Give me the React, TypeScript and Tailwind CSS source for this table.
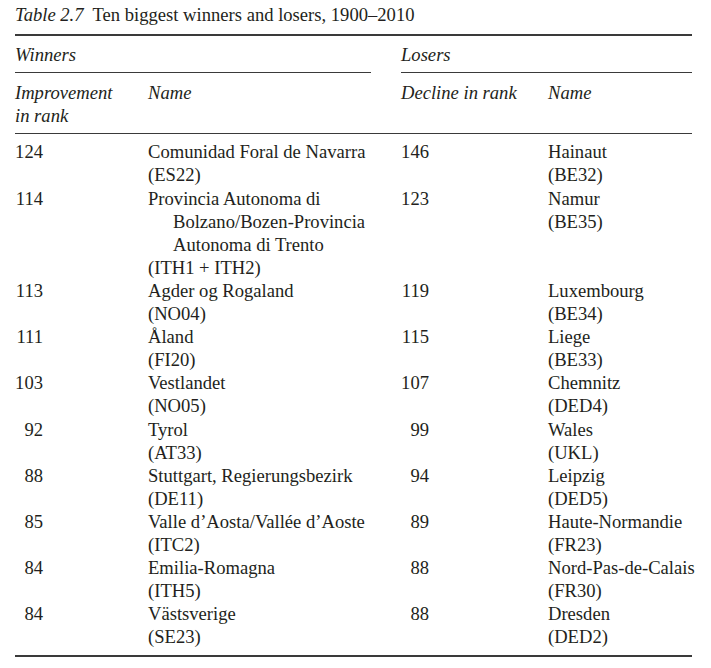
type Entry = { rank: number; name: string[]; code: string };

const winners: Entry[] = [
  { rank: 124, name: ["Comunidad Foral de Navarra"], code: "(ES22)" },
  {
    rank: 114,
    name: ["Provincia Autonoma di", "Bolzano/Bozen-Provincia", "Autonoma di Trento"],
    code: "(ITH1 + ITH2)",
  },
  { rank: 113, name: ["Agder og Rogaland"], code: "(NO04)" },
  { rank: 111, name: ["Åland"], code: "(FI20)" },
  { rank: 103, name: ["Vestlandet"], code: "(NO05)" },
  { rank: 92, name: ["Tyrol"], code: "(AT33)" },
  { rank: 88, name: ["Stuttgart, Regierungsbezirk"], code: "(DE11)" },
  { rank: 85, name: ["Valle d’Aosta/Vallée d’Aoste"], code: "(ITC2)" },
  { rank: 84, name: ["Emilia-Romagna"], code: "(ITH5)" },
  { rank: 84, name: ["Västsverige"], code: "(SE23)" },
];

const losers: Entry[] = [
  { rank: 146, name: ["Hainaut"], code: "(BE32)" },
  { rank: 123, name: ["Namur"], code: "(BE35)" },
  { rank: 119, name: ["Luxembourg"], code: "(BE34)" },
  { rank: 115, name: ["Liege"], code: "(BE33)" },
  { rank: 107, name: ["Chemnitz"], code: "(DED4)" },
  { rank: 99, name: ["Wales"], code: "(UKL)" },
  { rank: 94, name: ["Leipzig"], code: "(DED5)" },
  { rank: 89, name: ["Haute-Normandie"], code: "(FR23)" },
  { rank: 88, name: ["Nord-Pas-de-Calais"], code: "(FR30)" },
  { rank: 88, name: ["Dresden"], code: "(DED2)" },
];

const NameCell = ({ entry }: { entry: Entry }) => (
  <div>
    {entry.name.map((line, i) => (
      <div key={i} className={i > 0 ? "pl-[25px]" : ""}>
        {line}
      </div>
    ))}
    <div>{entry.code}</div>
  </div>
);

export default function App() {
  return (
    <div className="bg-white min-h-[668px] pl-[15px] pt-[3px] font-['Liberation_Serif',serif] text-[18.6px] leading-[23.1px] text-[#231f20]">
      <div className="w-[677px]">
        <p className="whitespace-nowrap">
          <i>Table 2.7</i>&nbsp; Ten biggest winners and losers, 1900–2010
        </p>
        <div className="mt-[8px] h-[2px] bg-[#3a3a3a]" />

        {/* group headers */}
        <div className="flex italic">
          <div className="w-[356px]">
            <p className="pt-[7px] pb-[6px]">Winners</p>
            <div className="h-px bg-[#3a3a3a]" />
          </div>
          <div className="ml-[30px] flex-1">
            <p className="pt-[7px] pb-[6px]">Losers</p>
            <div className="h-px bg-[#3a3a3a]" />
          </div>
        </div>

        {/* column headers */}
        <div className="grid grid-cols-[133px_253px_147px_1fr] italic pt-[8px] pb-[6px]">
          <p>
            Improvement
            <br />
            in rank
          </p>
          <p>Name</p>
          <p>Decline in rank</p>
          <p>Name</p>
        </div>
        <div className="h-px bg-[#3a3a3a]" />

        {/* body */}
        <div className="grid grid-cols-[133px_253px_147px_1fr] whitespace-nowrap pt-[6px] pb-[7px]">
          {winners.map((w, i) => {
            const l = losers[i];
            return (
              <div key={i} className="contents">
                <div>
                  <span className="block w-[28px] text-right">{w.rank}</span>
                </div>
                <NameCell entry={w} />
                <div>
                  <span className="block w-[28px] text-right">{l.rank}</span>
                </div>
                <NameCell entry={l} />
              </div>
            );
          })}
        </div>
        <div className="h-[2px] bg-[#3a3a3a]" />
      </div>
    </div>
  );
}
